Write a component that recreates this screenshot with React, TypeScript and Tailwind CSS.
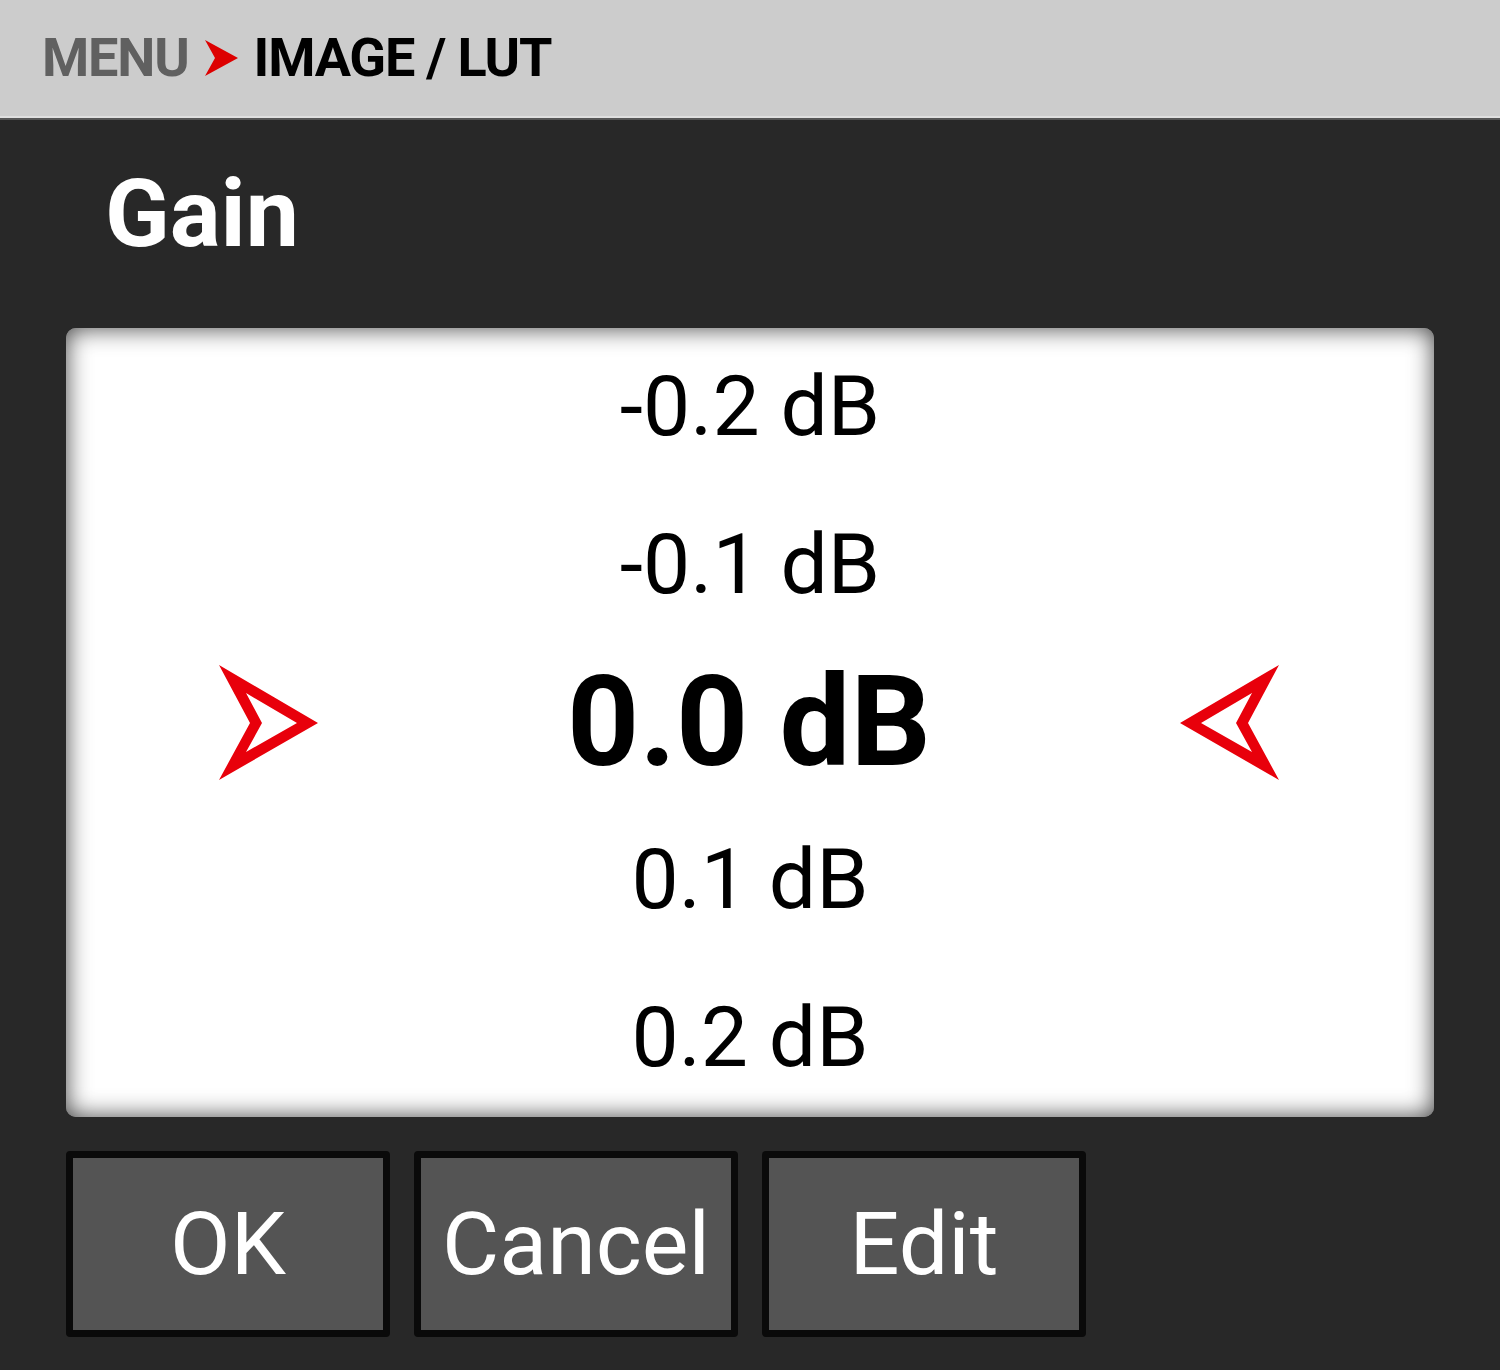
import React from "react";

const rows = [
  { label: "-0.2 dB", active: false },
  { label: "-0.1 dB", active: false },
  { label: "0.0 dB", active: true },
  { label: "0.1 dB", active: false },
  { label: "0.2 dB", active: false },
];

function PointerArrow({ flip }: { flip?: boolean }) {
  // outline arrow with a notch on its back side
  const d = flip
    ? "M99 0 L0 58 L99 115 L68 58 Z M72 28 L21 58 L72 87 L56 58 Z"
    : "M1 0 L100 58 L1 115 L32 58 Z M28 28 L79 58 L28 87 L44 58 Z";
  return (
    <svg width="100" height="115" viewBox="0 0 100 115" className="block">
      <path d={d} fill="#e8000b" fillRule="evenodd" />
    </svg>
  );
}

function Crumb() {
  return (
    <svg width="33" height="36" viewBox="0 0 33 36" className="block">
      <path d="M0 0 L33 18 L0 36 L10 18 Z" fill="#dd0000" />
    </svg>
  );
}

export default function App() {
  const font = { fontFamily: "Roboto, 'Noto Sans', sans-serif" };

  return (
    <div
      className="flex h-[1370px] w-[1500px] flex-col overflow-hidden bg-[#282828]"
      style={font}
    >
      <header className="flex h-[120px] shrink-0 items-center gap-[16px] border-b-2 border-[#555] bg-[#cccccc] pb-[2px] pl-[42px] shadow-[inset_0_-2px_0_#dedede]">
        <span className="text-[54px] font-bold leading-none tracking-[-1.2px] text-[#606060]">
          MENU
        </span>
        <Crumb />
        <span className="text-[54px] font-bold leading-none tracking-[-1.2px] text-black">
          IMAGE / LUT
        </span>
      </header>

      <h1 className="mt-[46px] pl-[105px] text-[95px] font-bold leading-none text-white">
        Gain
      </h1>

      <div className="mx-[66px] mt-[67px] flex h-[789px] flex-col rounded-[10px] bg-white shadow-[inset_0_0_24px_rgba(0,0,0,0.75)]">
        {rows.map((row) =>
          row.active ? (
            <div
              key={row.label}
              className="grid flex-1 grid-cols-[100px_1fr_100px] items-center pl-[152px] pr-[154px]"
            >
              <PointerArrow />
              <div className="text-center text-[126px] font-bold leading-none text-black">
                {row.label}
              </div>
              <PointerArrow flip />
            </div>
          ) : (
            <div
              key={row.label}
              className="flex flex-1 items-center justify-center text-[84px] leading-none text-black"
            >
              {row.label}
            </div>
          )
        )}
      </div>

      <div className="mt-[34px] flex gap-[24px] pl-[66px]">
        {["OK", "Cancel", "Edit"].map((b) => (
          <button
            key={b}
            className="flex h-[186px] w-[324px] items-center justify-center rounded-[4px] border-[7px] border-[#0a0a0a] bg-[#545454] text-[88px] leading-none text-white"
          >
            {b}
          </button>
        ))}
      </div>
    </div>
  );
}
